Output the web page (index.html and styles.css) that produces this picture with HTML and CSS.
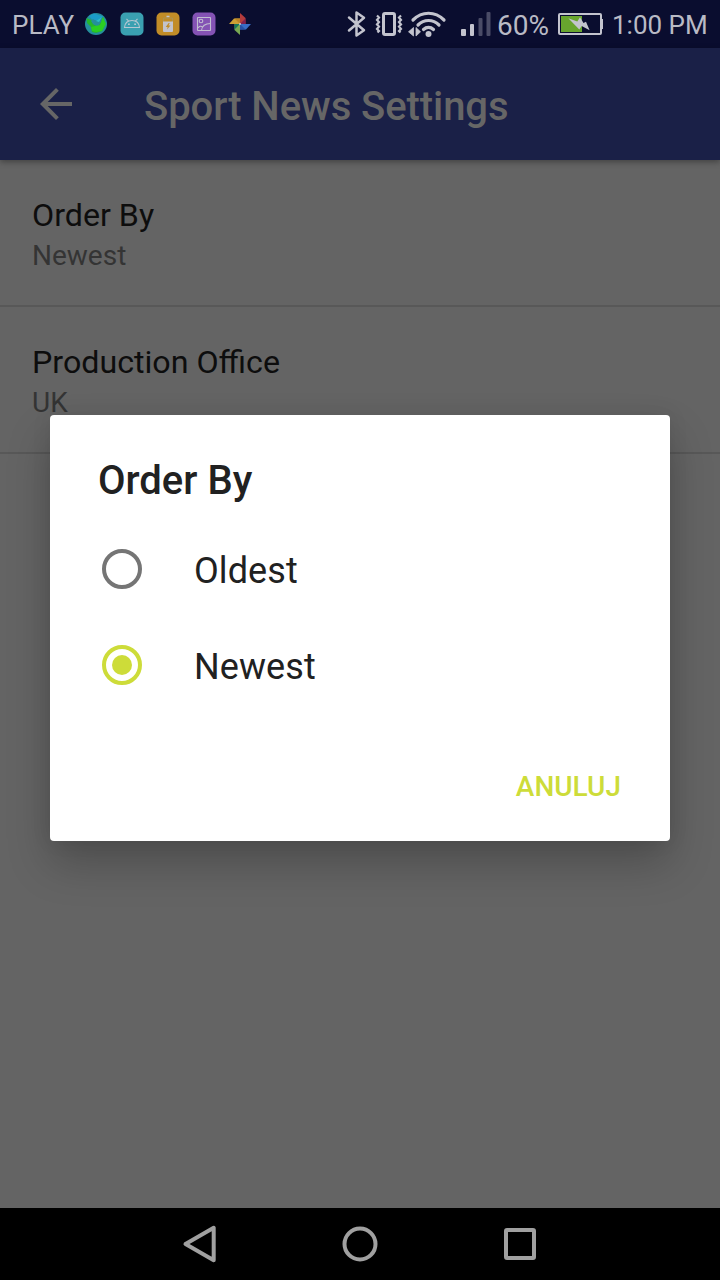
FILE: index.html
```html
<!DOCTYPE html>
<html lang="en">
<head>
<meta charset="utf-8">
<title>Sport News Settings</title>
<link rel="stylesheet" href="styles.css">
</head>
<body>
<div class="screen">
  <header class="status">
    <span class="carrier">PLAY</span>
    <div class="notifications">
      <svg width="24" height="24" viewBox="0 0 24 24"><circle cx="12" cy="12" r="11" fill="#258f9c"/><path d="M2.500 6L7 8l4 1-2 3 5 3 3-5 2-5 2 8-3 6-6 2-4-1-1-5-4-4z" fill="#25b52b"/><path d="M5 4l5-2.500 9 3-6 4-5-1z" fill="#1b9cc9"/><path d="M9 7l4 3 1 4-5-2-2-3z" fill="#258f9c"/><path d="M12 9l6-4-3 5z" fill="#2bbcca"/><path d="M7 15l9-2 3-8 3 7-4 7-6 1-4-1z" fill="#2bcf22"/></svg>
      <svg width="24" height="24" viewBox="0 0 24 24"><rect x=".5" y=".5" width="23" height="23" rx="5" fill="#3aa0b1"/><g fill="none" stroke="#b5c7d2" stroke-width="1.100"><path d="M4.500 15.500C5 10.500 8 8.500 12 8.500s7 2 7.500 7zM8.500 9L6.500 6.800M15.500 9l2-2.200"/></g><path d="M8 11.500h1.800v1.500H8zm6.200 0H16v1.500h-1.800z" fill="#b5c7d2"/></svg>
      <svg width="24" height="24" viewBox="0 0 24 24"><rect x=".5" y=".5" width="23" height="23" rx="5" fill="#c18c27"/><path d="M10.500 4.500h3" stroke="#c5c7d0" stroke-width="1.500"/><path d="M7.500 10V6h9v4" fill="none" stroke="#a59562" stroke-width=".8"/><path d="M7 9.500h10V19a1 1 0 0 1-1 1H8a1 1 0 0 1-1-1z" fill="#c2c3cc"/><path d="M12.700 11l-3 4h2L11 17.500l3.500-4h-2l1.200-2.500z" fill="#c18c27"/></svg>
      <svg width="24" height="24" viewBox="0 0 24 24"><rect x=".5" y=".5" width="23" height="23" rx="5" fill="#8453b4"/><g fill="none" stroke="#c0bed0" stroke-width="1.100"><rect x="5.500" y="5.500" width="13" height="13" rx=".5"/><circle cx="9" cy="9" r="1.800"/><path d="M9.500 18.500c.5-4.500 4-7 9-7M6 16c1.500-2 3-2.200 4.500-1"/></g></svg>
      <svg width="24" height="24" viewBox="0 0 24 24"><path d="M12 12V1l5.500 5v6z" fill="#b33b3c"/><path d="M12 12l5.500-5.500V12z" fill="#81204f"/><path d="M12 12h11l-5 5.500h-6z" fill="#386dc5"/><path d="M12 12l5.500 5.500H12z" fill="#2850a3"/><path d="M12 12v11l-5.500-5V12z" fill="#78a852"/><path d="M12 12l-5.500 5.500V12z" fill="#14785a"/><path d="M12 12H1l5-5.500h6z" fill="#cca035"/><path d="M12 12L6.500 6.500H12z" fill="#bd8525"/><circle cx="12" cy="12" r="1" fill="#c6c8d5"/></svg>
    </div>
    <div class="indicators">
      <svg class="bluetooth" width="20" height="28" viewBox="0 0 20 28"><path d="M2 7.500L17 20.300 9.500 25.500V2.500L17 7.700 2 20.500" fill="none" stroke="#c3c4ce" stroke-width="2.500" stroke-linejoin="round" stroke-linecap="round"/></svg>
      <svg class="vibrate" width="28" height="26" viewBox="0 0 28 26"><g fill="none" stroke="#c3c4ce"><rect x="8.500" y="2.500" width="11" height="21" rx="1.500" stroke-width="3"/><path d="M2 4.500l2 2-2 2.500 2 2-2 2.500 2 2-2 2.500 2 2-1.500 1.500M26 4.500l-2 2 2 2.500-2 2 2 2.500-2 2 2 2.500-2 2 1.500 1.500" stroke-width="2.200"/></g></svg>
      <svg class="wifi" width="38" height="28" viewBox="0 0 38 28"><g fill="none" stroke="#c3c4ce" stroke-width="3.200" stroke-linecap="round"><path d="M5 10C14 1 27 1 36 10M10 15c6-6 15-6 21 0M15.500 19.500c3-2.700 7-2.700 10 0"/></g><circle cx="20.500" cy="24" r="3" fill="#c3c4ce"/><path d="M5.500 17.500V26L0.500 21.800zM8 17.500l4.500 4.300L8 26z" fill="#c3c4ce" stroke="#c3c4ce" stroke-width=".8"/></svg>
      <svg class="signal" width="30" height="26" viewBox="0 0 30 26"><g fill="#c3c4ce"><rect y="18" width="5" height="7" rx="1"/><rect x="9" y="13" width="4" height="12" rx="1"/></g><g fill="#4a4c67"><rect x="17.500" y="7" width="4" height="18" rx="1"/><rect x="25.500" y="1" width="4" height="24" rx="1"/></g></svg>
      <span class="percent">60%</span>
      <svg class="battery" width="45" height="24" viewBox="0 0 45 24"><rect x="1" y="2" width="42" height="20" rx="1" fill="none" stroke="#c3c4ce" stroke-width="2"/><path d="M3 4h21v16H3z" fill="#68a52e"/><path d="M43 7h2v10h-2z" fill="#c3c4ce"/><path d="M10.300 6.300l9 3.200 2.700-4.200 3.500 5.700 2.500-1.200 3.600 8.500-7.900-4.300-2.400 3.500z" fill="#c3c4ce"/></svg>
      <span class="clock">1:00 PM</span>
    </div>
  </header>
  <nav class="toolbar">
    <svg class="back" width="32" height="32" viewBox="0 0 32 32"><path d="M32 14H7.700L18.800 2.800 16 0 0 16l16 16 2.800-2.800L7.700 18H32z" fill="#666"/></svg>
    <h1 class="heading">Sport News Settings</h1>
  </nav>
  <main class="settings">
    <section class="preference">
      <div class="name">Order By</div>
      <div class="value">Newest</div>
    </section>
    <section class="preference">
      <div class="name">Production Office</div>
      <div class="value">UK</div>
    </section>
  </main>
  <footer class="navbar">
    <svg width="36" height="40" viewBox="0 0 36 40"><path d="M31.700 3.800v32.400L3.500 20z" fill="none" stroke="#a0a0a0" stroke-width="4" stroke-linejoin="round"/></svg>
    <svg width="36" height="36" viewBox="0 0 36 36"><circle cx="18" cy="18" r="15.500" fill="none" stroke="#a0a0a0" stroke-width="4"/></svg>
    <svg width="36" height="36" viewBox="0 0 36 36"><rect x="4" y="4" width="28" height="28" rx="1" fill="none" stroke="#a0a0a0" stroke-width="4"/></svg>
  </footer>
  <div class="dialog" role="dialog">
    <h2 class="dialog-title">Order By</h2>
    <div class="option"><span class="radio"></span><span class="label">Oldest</span></div>
    <div class="option"><span class="radio checked"></span><span class="label">Newest</span></div>
    <div class="actions"><button class="cancel">ANULUJ</button></div>
  </div>
</div>
</body>
</html>
```
FILE: styles.css
```css
* { box-sizing: border-box; }
body { margin: 0; font-family: Roboto, sans-serif; }
svg { display: block; flex: none; overflow: visible; }
.screen {
  position: relative;
  display: flex;
  flex-direction: column;
  width: 720px;
  height: 1280px;
  overflow: hidden;
  background: #646464;
}
.status {
  display: flex;
  align-items: center;
  height: 48px;
  padding-left: 12px;
  background: #0a0d2f;
  color: #b9bac5;
  font-size: 28px;
  line-height: 44px;
  white-space: nowrap;
}
.carrier { width: 72px; padding-top: 1px; font-size: 26px; }
.notifications { display: flex; gap: 12px; width: 168px; }
.indicators { display: flex; align-items: center; margin-left: 95px; }
.vibrate { margin-left: 8px; }
.wifi { margin-left: 5px; }
.signal { margin-left: 15px; }
.percent { width: 63px; padding: 4px 0 0 6px; }
.battery { margin-left: 4px; }
.clock { padding: 1px 0 0 9px; font-size: 26px; }
.toolbar {
  position: relative;
  display: flex;
  align-items: center;
  height: 112px;
  padding-left: 40px;
  background: #1a2047;
  box-shadow: 0 2px 6px rgba(0, 0, 0, .35);
}
.heading { margin: 0 0 0 72px; padding-top: 6px; font-size: 40px; font-weight: 500; line-height: 48px; letter-spacing: -.07px; color: #666; }
.settings { flex: 1; }
.preference { height: 147px; padding: 35px 32px 0; border-bottom: 2px solid #585858; }
.name { font-size: 32.2px; line-height: 40px; color: #0d0d0d; }
.value { font-size: 28px; line-height: 42px; color: #343434; }
.navbar {
  display: flex;
  align-items: center;
  justify-content: center;
  gap: 124px;
  height: 72px;
  background: #000;
}
.dialog {
  position: absolute;
  left: 50px;
  top: 415px;
  width: 620px;
  height: 426px;
  padding-top: 42px;
  border-radius: 4px;
  background: #fff;
  box-shadow: 0 22px 44px rgba(0, 0, 0, .23), 0 0 20px rgba(0, 0, 0, .08);
}
.dialog-title { margin: 0 0 16px; padding-left: 48px; font-size: 40px; font-weight: 500; line-height: 48px; color: #212121; }
.option { display: flex; align-items: center; height: 96px; padding-left: 52px; }
.radio { display: grid; place-items: center; width: 40px; height: 40px; border: 4px solid #757575; border-radius: 50%; }
.radio.checked { border-color: #cddc39; }
.radio.checked::after { content: ""; width: 20px; height: 20px; border-radius: 50%; background: #cddc39; }
.label { padding: 3px 0 0 52px; font-size: 36px; line-height: 44px; letter-spacing: .08px; color: #212121; }
.actions { display: flex; justify-content: flex-end; padding: 50px 49px 0 0; }
.cancel { padding: 0; border: 0; background: none; font: 500 28px/48px Roboto, sans-serif; color: #cddc39; }
```
